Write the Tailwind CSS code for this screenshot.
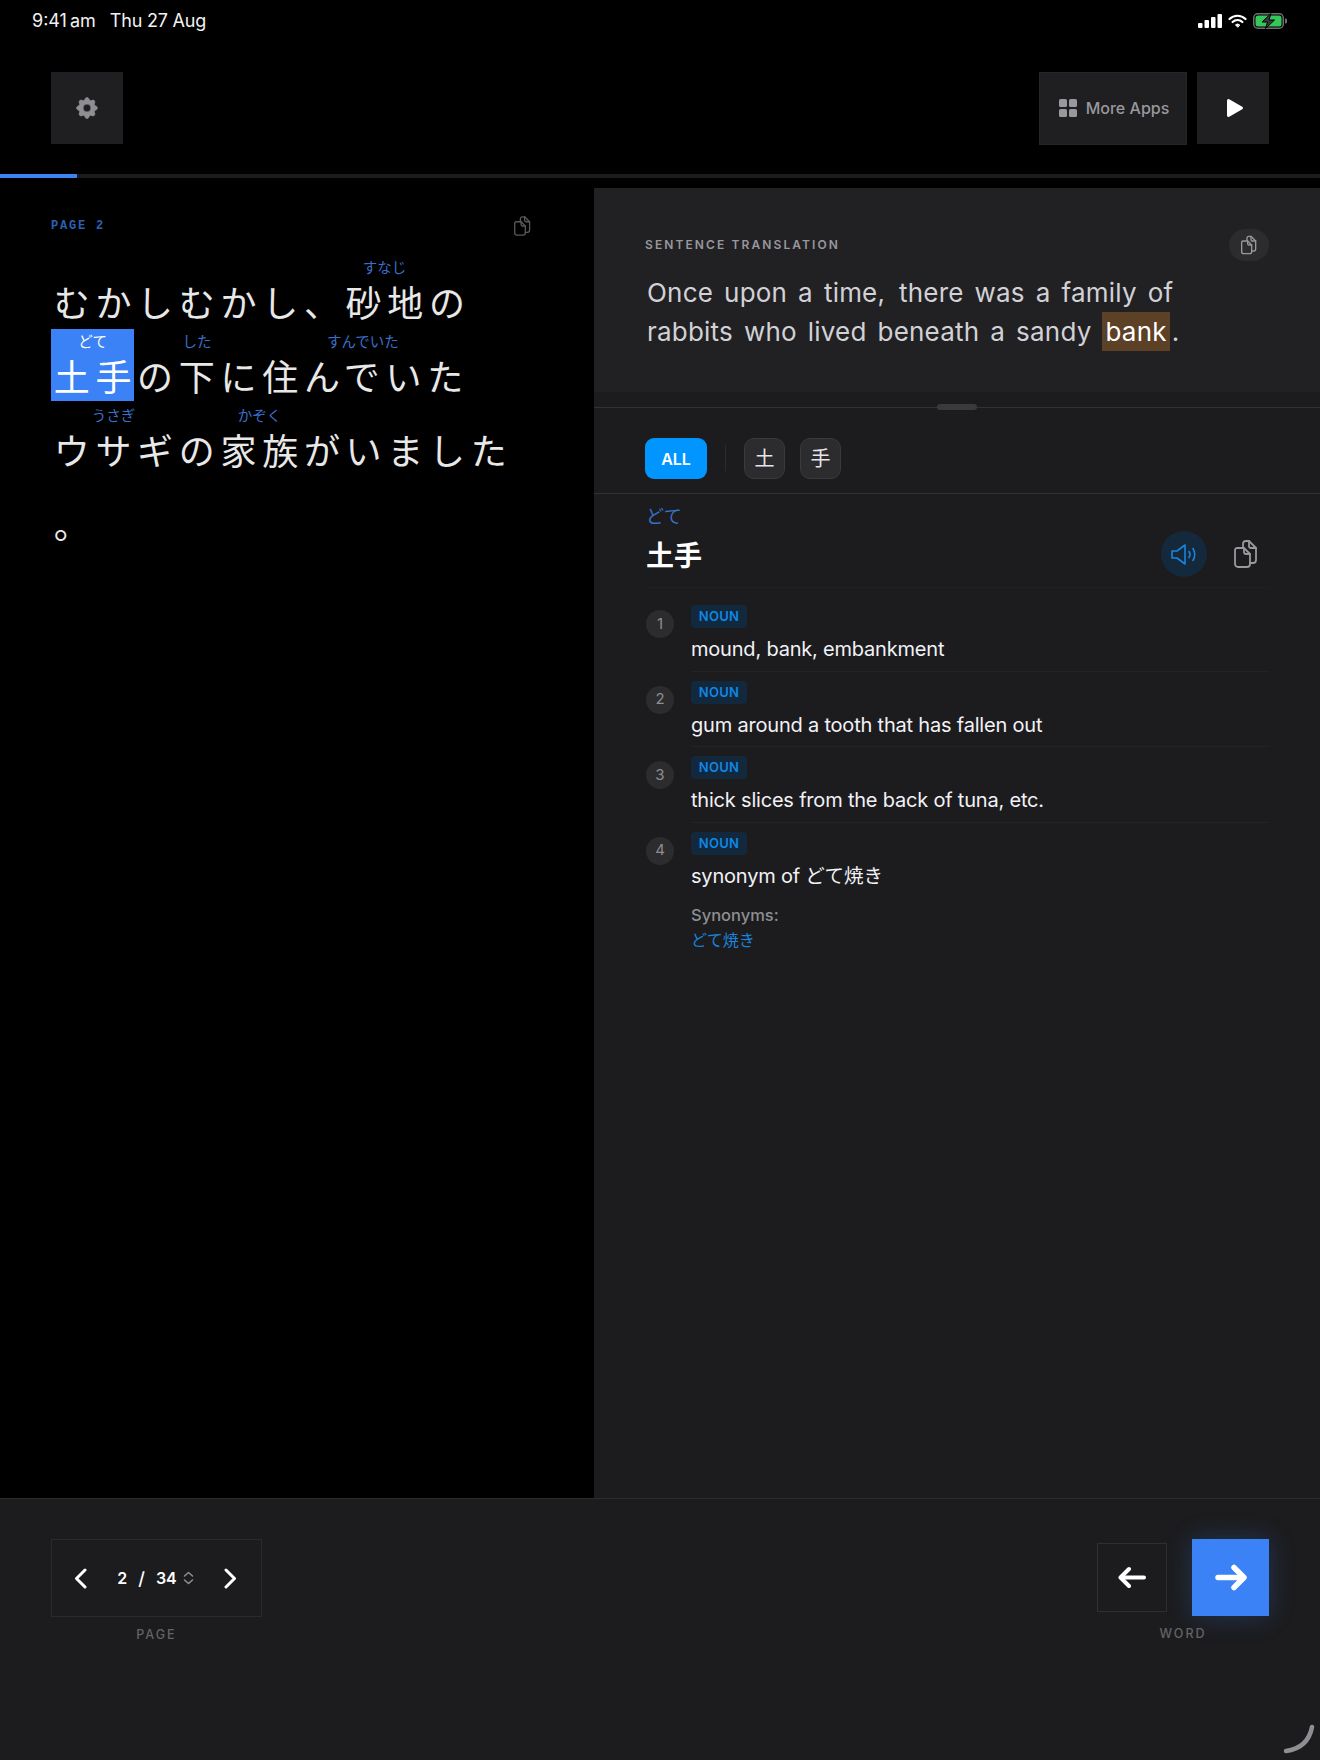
<!DOCTYPE html>
<html lang="ja">
<head>
<meta charset="utf-8">
<script src="https://cdn.jsdelivr.net/npm/@tailwindcss/browser@4"></script>
<title>Reader</title>
</head>
<body class="bg-black">
<div class="relative w-[1320px] h-[1760px] bg-black flex flex-col overflow-hidden text-white font-['Inter','Noto_Sans_CJK_JP',sans-serif]">

  <!-- status bar -->
  <div class="h-[72px] pl-[32px] pr-[33px] pt-[10px] flex justify-between items-start">
    <div class="flex gap-[14px] text-[18px] leading-[22px] text-[#f2f2f2]">
      <span>9:41<span class="ml-[3px]">am</span></span><span class="tracking-[-0.2px]">Thu 27 Aug</span>
    </div>
    <div class="flex items-center gap-[6px] pt-[3px]">
      <svg width="24" height="14" viewBox="0 0 24 14" fill="#fff"><rect x="0" y="9" width="4.5" height="5" rx="1"/><rect x="6.5" y="6" width="4.5" height="8" rx="1"/><rect x="13" y="3" width="4.5" height="11" rx="1"/><rect x="19.5" y="0" width="4.5" height="14" rx="1"/></svg>
      <svg width="19" height="14" viewBox="0 0 19 14" fill="none" stroke="#fff" stroke-width="2.2" stroke-linecap="round"><path d="M1.5 5 A11.5 11.5 0 0 1 17.5 5"/><path d="M4.6 8 A7 7 0 0 1 14.4 8"/><path d="M9.5 13 L7.5 10.8 A3 3 0 0 1 11.5 10.8 Z" fill="#fff" stroke-width="1"/></svg>
      <svg width="34" height="16" viewBox="0 0 34 16" fill="none"><rect x="0.75" y="0.75" width="29.5" height="14.5" rx="4" stroke="#6e6e73" stroke-width="1.5"/><rect x="2.5" y="2.5" width="26" height="11" rx="2.5" fill="#34c759"/><path d="M32 5.5 a2.5 2.5 0 0 1 0 5z" fill="#6e6e73"/><path d="M18 0.5 L9 9 H14.5 L12.5 15.5 L21.5 7 H16 Z" fill="#3a3a3c" stroke="#000" stroke-width="1"/></svg>
    </div>
  </div>

  <!-- header -->
  <div class="h-[72px] pl-[51px] pr-[51px] flex justify-between items-center">
    <div class="w-[72px] h-[72px] bg-[#1f1f21] flex items-center justify-center">
      <svg width="26" height="26" viewBox="0 0 20 20" fill="#8e8e93" stroke="#8e8e93" stroke-width="0.5"><path fill-rule="evenodd" clip-rule="evenodd" d="M11.49 3.17c-.38-1.56-2.6-1.56-2.98 0a1.532 1.532 0 01-2.286.948c-1.372-.836-2.942.734-2.106 2.106.54.886.061 2.042-.947 2.287-1.561.379-1.561 2.6 0 2.978a1.532 1.532 0 01.947 2.287c-.836 1.372.734 2.942 2.106 2.106a1.532 1.532 0 012.287.947c.379 1.561 2.6 1.561 2.978 0a1.533 1.533 0 012.287-.947c1.372.836 2.942-.734 2.106-2.106a1.533 1.533 0 01.947-2.287c1.561-.379 1.561-2.6 0-2.978a1.532 1.532 0 01-.947-2.287c.836-1.372-.734-2.942-2.106-2.106a1.532 1.532 0 01-2.287-.947zM10 13a3 3 0 100-6 3 3 0 000 6z"/></svg>
    </div>
    <div class="flex items-center gap-[10px]">
      <div class="w-[148px] h-[73px] bg-[#1f1f21] border border-[#262628] flex items-center justify-center gap-[9px] text-[16px] font-medium text-[#98989d]">
        <svg class="ml-[2px]" width="18" height="18" viewBox="0 0 18 18" fill="#98989d"><rect x="0" y="0" width="8" height="8" rx="1.5"/><rect x="10" y="0" width="8" height="8" rx="1.5"/><rect x="0" y="10" width="8" height="8" rx="1.5"/><rect x="10" y="10" width="8" height="8" rx="1.5"/></svg>
        <span>More Apps</span>
      </div>
      <div class="w-[72px] h-[72px] bg-[#1f1f21] flex items-center justify-center">
        <svg class="ml-[3px]" width="18" height="20" viewBox="0 0 18 20" fill="#fff" stroke="#fff" stroke-width="3" stroke-linejoin="round"><path d="M2.5 2.5 L15.5 10 L2.5 17.5 Z"/></svg>
      </div>
    </div>
  </div>

  <!-- progress -->
  <div class="mt-[30px] h-[4px] bg-[#1c1c1e]"><div class="w-[77px] h-full bg-[#3b82f6]"></div></div>

  <!-- main -->
  <div class="mt-[10px] flex-1 flex min-h-0">
    <!-- left: reading text -->
    <div class="w-[594px] pl-[51px] pt-[29px]">
      <div class="w-[480px] flex justify-between items-center h-[18px]">
        <span class="font-['Liberation_Mono',monospace] font-bold text-[12px] tracking-[1.8px] whitespace-pre text-[#2e5fb3]">PAGE 2</span>
        <svg width="17" height="20" viewBox="0 0 24 28" fill="none" stroke="#5a5a5e" stroke-width="1.8" stroke-linecap="round" stroke-linejoin="round"><path d="M9 7V4a3 3 0 0 1 3-3h3l7 7v12a3 3 0 0 1-3 3h-3"/><path d="M15 1v5a2 2 0 0 0 2 2h5"/><path d="M3 8h7l6 6v10a3 3 0 0 1-3 3H4a3 3 0 0 1-3-3V10a2 2 0 0 1 2-2z"/><path d="M10 8v4a2 2 0 0 0 2 2h4"/></svg>
      </div>
      <div class="mt-[20px] flex flex-col gap-[2px] text-[36px] tracking-[5.7px] text-[#e8e8e8] font-['Noto_Sans_CJK_JP',sans-serif] font-normal">
        <div class="flex h-[72px]">
          <div class="flex flex-col"><span class="h-[24px]"></span><span class="h-[48px] leading-[44px] translate-x-[2.7px]">むかしむかし、</span></div>
          <div class="flex flex-col items-center"><span class="h-[24px] leading-[24px] text-[14.5px] tracking-normal text-[#3b6fc9]">すなじ</span><span class="h-[48px] leading-[44px] translate-x-[2.7px]">砂地</span></div>
          <div class="flex flex-col"><span class="h-[24px]"></span><span class="h-[48px] leading-[44px] translate-x-[2.7px]">の</span></div>
        </div>
        <div class="flex h-[72px]">
          <div class="flex flex-col items-center bg-[#3b82f6] text-white"><span class="h-[24px] leading-[24px] text-[14.5px] tracking-normal">どて</span><span class="h-[48px] leading-[44px] translate-x-[2.7px]">土手</span></div>
          <div class="flex flex-col"><span class="h-[24px]"></span><span class="h-[48px] leading-[44px] translate-x-[2.7px]">の</span></div>
          <div class="flex flex-col items-center"><span class="h-[24px] leading-[24px] text-[14.5px] tracking-normal text-[#3b6fc9]">した</span><span class="h-[48px] leading-[44px] translate-x-[2.7px]">下</span></div>
          <div class="flex flex-col"><span class="h-[24px]"></span><span class="h-[48px] leading-[44px] translate-x-[2.7px]">に</span></div>
          <div class="flex flex-col items-center"><span class="h-[24px] leading-[24px] text-[14.5px] tracking-normal text-[#3b6fc9]">すんでいた</span><span class="h-[48px] leading-[44px] translate-x-[2.7px]">住んでいた</span></div>
        </div>
        <div class="flex h-[72px]">
          <div class="flex flex-col items-center"><span class="h-[24px] leading-[24px] text-[14.5px] tracking-normal text-[#3b6fc9]">うさぎ</span><span class="h-[48px] leading-[44px] translate-x-[2.7px]">ウサギ</span></div>
          <div class="flex flex-col"><span class="h-[24px]"></span><span class="h-[48px] leading-[44px] translate-x-[2.7px]">の</span></div>
          <div class="flex flex-col items-center"><span class="h-[24px] leading-[24px] text-[14.5px] tracking-normal text-[#3b6fc9]">かぞく</span><span class="h-[48px] leading-[44px] translate-x-[2.7px]">家族</span></div>
          <div class="flex flex-col"><span class="h-[24px]"></span><span class="h-[48px] leading-[44px] translate-x-[2.7px]">がいました</span></div>
        </div>
        <div class="flex h-[72px]">
          <div class="flex flex-col"><span class="h-[24px]"></span><span class="h-[48px] leading-[44px] translate-x-[2.7px]">。</span></div>
        </div>
      </div>
    </div>

    <!-- right: panel -->
    <div class="relative flex-1 bg-[#1c1c1e] flex flex-col">
      <div class="h-[204px] bg-[#212124] pl-[51px] pr-[51px] pt-[41px]">
        <div class="flex justify-between items-center h-[32px]">
          <span class="text-[12px] font-semibold tracking-[2.1px] text-[#98989d]">SENTENCE TRANSLATION</span>
          <div class="w-[40px] h-[32px] rounded-full bg-[#2c2c2e] flex items-center justify-center">
            <svg width="16" height="20" viewBox="0 0 24 28" fill="none" stroke="#98989d" stroke-width="2" stroke-linecap="round" stroke-linejoin="round"><path d="M9 7V4a3 3 0 0 1 3-3h3l7 7v12a3 3 0 0 1-3 3h-3"/><path d="M15 1v5a2 2 0 0 0 2 2h5"/><path d="M3 8h7l6 6v10a3 3 0 0 1-3 3H4a3 3 0 0 1-3-3V10a2 2 0 0 1 2-2z"/><path d="M10 8v4a2 2 0 0 0 2 2h4"/></svg>
          </div>
        </div>
        <p class="mt-[12px] pl-[2px] text-[26px] leading-[39px] tracking-[0.2px] [word-spacing:3.5px] text-[#d1d1d6] whitespace-nowrap">Once upon a time<span class="tracking-[3px]">,</span> there was a family of<br>rabbits who lived beneath a sandy <span class="inline-block h-[39px] px-[3px] bg-[#5c4126] text-white">bank</span><span class="ml-[2px]">.</span></p>
      </div>
      <div class="h-[15px]"></div>
      <div class="relative h-px bg-[#323234]">
        <div class="absolute left-[343px] top-[-3px] w-[40px] h-[6px] rounded-full bg-[#3a3a3c]"></div>
      </div>
      <div class="h-[85px] pl-[51px] pt-[30px] flex items-start gap-[18px]">
        <div class="w-[62px] h-[41px] rounded-[9px] bg-[#0095ff] flex items-center justify-center text-[16px] font-semibold text-white">ALL</div>
        <div class="mt-[7px] w-px h-[26px] bg-[#2c2c2e]"></div>
        <div class="flex gap-[15px]">
          <div class="w-[41px] h-[41px] rounded-[10px] bg-[#2c2c2e] border border-[#3a3a3c] flex items-center justify-center text-[20px] text-[#e5e5ea]">土</div>
          <div class="w-[41px] h-[41px] rounded-[10px] bg-[#2c2c2e] border border-[#3a3a3c] flex items-center justify-center text-[20px] text-[#e5e5ea]">手</div>
        </div>
      </div>
      <div class="h-px bg-[#323234]"></div>

      <div class="pl-[52px] pr-[50px]">
        <div class="h-[94px] border-b border-[#202022] flex justify-between">
          <div>
            <div class="mt-[10px] text-[18px] leading-[26px] text-[#3b6fc9]">どて</div>
            <div class="mt-[6px] text-[28px] leading-[40px] font-bold text-white">土手</div>
          </div>
          <div class="flex items-start pt-[37px] pr-[12px] gap-[27px]">
            <div class="w-[46px] h-[46px] rounded-full bg-[#14293c] flex items-center justify-center">
              <svg width="27" height="21" viewBox="0 0 27 21" fill="none" stroke="#1a84dc" stroke-width="1.6" stroke-linejoin="round" stroke-linecap="round"><path d="M1 7 H6 L14 1 V20 L6 14 H1 Z"/><path d="M18 7.5 Q20 10.5 18 13.5"/><path d="M22 4.5 Q25.5 10.5 22 16.5"/></svg>
            </div>
            <svg class="mt-[9px]" width="24" height="28" viewBox="0 0 24 28" fill="none" stroke="#98989d" stroke-width="1.8" stroke-linecap="round" stroke-linejoin="round"><path d="M9 7V4a3 3 0 0 1 3-3h3l7 7v12a3 3 0 0 1-3 3h-3"/><path d="M15 1v5a2 2 0 0 0 2 2h5"/><path d="M3 8h7l6 6v10a3 3 0 0 1-3 3H4a3 3 0 0 1-3-3V10a2 2 0 0 1 2-2z"/><path d="M10 8v4a2 2 0 0 0 2 2h4"/></svg>
          </div>
        </div>

        <div class="mt-[17px] flex flex-col">
          <div class="flex gap-[17px]">
            <div class="mt-[5px] w-[28px] h-[28px] shrink-0 rounded-full bg-[#2c2c2e] flex items-center justify-center text-[15px] text-[#8e8e93]">1</div>
            <div class="flex-1 h-[66.5px] mb-[9px] border-b border-[#232325]">
              <span class="block w-[56px] h-[23px] rounded-[4px] bg-[#12283c] text-center text-[13px] leading-[23px] font-semibold tracking-[0.3px] text-[#0f87e6]">NOUN</span>
              <div class="mt-[7px] text-[20px] leading-[28px] tracking-[-0.2px] text-[#f2f2f7]">mound, bank, embankment</div>
            </div>
          </div>
          <div class="flex gap-[17px]">
            <div class="mt-[5px] w-[28px] h-[28px] shrink-0 rounded-full bg-[#2c2c2e] flex items-center justify-center text-[15px] text-[#8e8e93]">2</div>
            <div class="flex-1 h-[66.5px] mb-[9px] border-b border-[#232325]">
              <span class="block w-[56px] h-[23px] rounded-[4px] bg-[#12283c] text-center text-[13px] leading-[23px] font-semibold tracking-[0.3px] text-[#0f87e6]">NOUN</span>
              <div class="mt-[7px] text-[20px] leading-[28px] tracking-[-0.2px] text-[#f2f2f7]">gum around a tooth that has fallen out</div>
            </div>
          </div>
          <div class="flex gap-[17px]">
            <div class="mt-[5px] w-[28px] h-[28px] shrink-0 rounded-full bg-[#2c2c2e] flex items-center justify-center text-[15px] text-[#8e8e93]">3</div>
            <div class="flex-1 h-[66.5px] mb-[9px] border-b border-[#232325]">
              <span class="block w-[56px] h-[23px] rounded-[4px] bg-[#12283c] text-center text-[13px] leading-[23px] font-semibold tracking-[0.3px] text-[#0f87e6]">NOUN</span>
              <div class="mt-[7px] text-[20px] leading-[28px] tracking-[-0.2px] text-[#f2f2f7]">thick slices from the back of tuna, etc.</div>
            </div>
          </div>
          <div class="flex gap-[17px]">
            <div class="mt-[5px] w-[28px] h-[28px] shrink-0 rounded-full bg-[#2c2c2e] flex items-center justify-center text-[15px] text-[#8e8e93]">4</div>
            <div class="flex-1">
              <span class="block w-[56px] h-[23px] rounded-[4px] bg-[#12283c] text-center text-[13px] leading-[23px] font-semibold tracking-[0.3px] text-[#0f87e6]">NOUN</span>
              <div class="mt-[7px] text-[20px] leading-[28px] tracking-[-0.2px] text-[#f2f2f7]">synonym of <span class="text-[19.5px] tracking-normal">どて焼き</span></div>
              <div class="mt-[13px] text-[16.5px] leading-[24px] font-medium text-[#8e8e93]">Synonyms:</div>
              <div class="mt-[1px] text-[16px] leading-[24px] text-[#1a84dc]">どて焼き</div>
            </div>
          </div>
        </div>
      </div>
    </div>
  </div>

  <!-- footer -->
  <div class="relative h-[262px] bg-[#1c1c1e] border-t border-[#2c2c2e] pl-[51px] pr-[51px] pt-[40px] flex justify-between items-start">
    <div class="flex flex-col items-center">
      <div class="w-[211px] h-[78px] border-[1.5px] border-[#2a2a2c] flex items-center justify-between pl-[22px] pr-[24px]">
        <svg width="13" height="21" viewBox="0 0 13 21" fill="none" stroke="#fff" stroke-width="3" stroke-linecap="round" stroke-linejoin="round"><path d="M11 2 L2.5 10.5 L11 19"/></svg>
        <div class="flex items-center text-[16px] font-semibold text-white whitespace-pre">
          <span>2</span><span class="ml-[11px] mr-[11px] text-[18px] font-medium">/</span><span>34</span>
          <svg class="ml-[6px]" width="11" height="14" viewBox="0 0 11 14" fill="none" stroke="#8e8e93" stroke-width="1.5" stroke-linecap="round" stroke-linejoin="round"><path d="M1.5 5 L5.5 1.5 L9.5 5"/><path d="M1.5 9 L5.5 12.5 L9.5 9"/></svg>
        </div>
        <svg width="13" height="21" viewBox="0 0 13 21" fill="none" stroke="#fff" stroke-width="3" stroke-linecap="round" stroke-linejoin="round"><path d="M2 2 L10.5 10.5 L2 19"/></svg>
      </div>
      <span class="mt-[10px] text-[12.5px] leading-[16px] font-medium tracking-[2px] text-[#636366]">PAGE</span>
    </div>
    <div class="flex flex-col items-center">
      <div class="flex items-center gap-[25px]">
        <div class="w-[70px] h-[69px] border-[1.5px] border-[#2f2f31] flex items-center justify-center">
          <svg width="28" height="23" viewBox="0 0 28 23" fill="none" stroke="#fff" stroke-width="4" stroke-linecap="round" stroke-linejoin="round"><path d="M26 11.5 H3"/><path d="M11 3 L2.5 11.5 L11 20"/></svg>
        </div>
        <div class="w-[77px] h-[77px] bg-[#3b82f6] shadow-[0_0_24px_rgba(59,130,246,0.25)] flex items-center justify-center">
          <svg width="32" height="27" viewBox="0 0 32 27" fill="none" stroke="#fff" stroke-width="5.5" stroke-linecap="round" stroke-linejoin="round"><path d="M3 13.5 H28"/><path d="M19 3.5 L29 13.5 L19 23.5"/></svg>
        </div>
      </div>
      <span class="mt-[10px] text-[12.5px] leading-[16px] font-medium tracking-[2px] text-[#636366]">WORD</span>
    </div>
    <svg class="absolute right-[5px] bottom-[6px]" width="32" height="30" viewBox="0 0 32 30" fill="none" stroke="#8e8e93" stroke-width="4.5" stroke-linecap="round"><path d="M3 27 Q25 24 29 3"/></svg>
  </div>
</div>
</body>
</html>
